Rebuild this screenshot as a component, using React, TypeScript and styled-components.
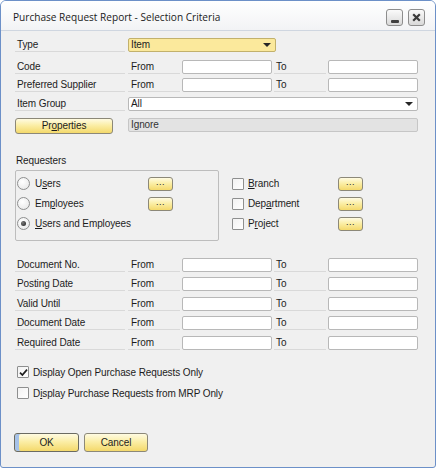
import React from "react";
import styled, { createGlobalStyle } from "styled-components";

const GlobalStyle = createGlobalStyle`
    html, body {
        margin: 0;
        padding: 0;
        background: #ffffff;
    }
    body {
        font-family: "Liberation Sans", Arial, sans-serif;
        font-size: 10px;
        letter-spacing: -0.1px;
        color: #1c1c1c;
    }
`;

const Window = styled.div`
    width: 436px;
    height: 468px;
    box-sizing: border-box;
    border: 1px solid #6c90c8;
    border-radius: 6px 6px 3px 3px;
    background: #f0f0f0;
    display: flex;
    flex-direction: column;
    overflow: hidden;
`;

const TitleBar = styled.div`
    height: 30px;
    flex: none;
    box-sizing: border-box;
    display: flex;
    align-items: flex-start;
    background: linear-gradient(#ffffff, #f2f3f5);
    border-bottom: 1px solid #cfd6e0;
`;

const Title = styled.span`
    font-family: "Open Sans", "Liberation Sans", sans-serif;
    font-size: 10.1px;
    letter-spacing: 0;
    line-height: 16px;
    color: #1b1b1b;
    margin: 8px 0 0 12px;
`;

const TitleButtons = styled.div`
    margin: 8px 10px 0 auto;
    display: flex;
    gap: 5px;
`;

const TitleButton = styled.div`
    width: 17px;
    height: 17px;
    box-sizing: border-box;
    border: 1px solid #8d8d8d;
    border-radius: 3px;
    background: linear-gradient(#fafafa, #d9d9d9);
    display: flex;
    align-items: center;
    justify-content: center;
`;

const MinimizeGlyph = styled.div`
    width: 8px;
    height: 3px;
    margin-top: 7px;
    background: #3f3f3f;
    border-radius: 1px;
`;

const Body = styled.div`
    flex: 1;
    display: flex;
    flex-direction: column;
    padding: 0 17px 15px 14px;
`;

const FieldRow = styled.div<{ $top: number; $align?: string }>`
    display: grid;
    grid-template-columns: 113px 54px 90px 2px 54px 90px;
    align-items: ${(p) => p.$align ?? "end"};
    margin-top: ${(p) => p.$top}px;
    min-height: 14px;
`;

const LabelCell = styled.div<{ $pad?: number; $col?: number }>`
    grid-column: ${(p) => p.$col ?? "auto"};
    height: 14px;
    box-sizing: border-box;
    border-bottom: 1px solid #d9d9d9;
    margin-right: ${(p) => (p.$col ? 2 : 3)}px;
    padding-left: ${(p) => p.$pad ?? 2}px;
    line-height: 14px;
    white-space: nowrap;
`;

const TextBox = styled.div<{ $col: number }>`
    grid-column: ${(p) => p.$col};
    height: 14px;
    box-sizing: border-box;
    border: 1px solid #b8b8b8;
    border-radius: 2px;
    background: #ffffff;
`;

const Select = styled.div<{ $yellow?: boolean; $width?: number }>`
    grid-column: 2 / -1;
    width: ${(p) => (p.$width ? `${p.$width}px` : "auto")};
    height: 14px;
    box-sizing: border-box;
    border: 1px solid ${(p) => (p.$yellow ? "#c2b16c" : "#b8b8b8")};
    border-radius: 2px;
    background: ${(p) => (p.$yellow ? "#fbe99c" : "#ffffff")};
    display: flex;
    align-items: center;
    padding: 0 4px 0 2px;
    line-height: 12px;
`;

const Arrow = styled.span`
    margin-left: auto;
    width: 0;
    height: 0;
    border-left: 4px solid transparent;
    border-right: 4px solid transparent;
    border-top: 4px solid #262626;
`;

const ReadOnlyBox = styled.div`
    grid-column: 2 / -1;
    height: 14px;
    box-sizing: border-box;
    border: 1px solid #c6c6c6;
    border-radius: 2px;
    background: #e3e3e3;
    padding-left: 2px;
    line-height: 12px;
    color: #333;
`;

const YellowButton = styled.div<{ $width: number; $height: number; $default?: boolean }>`
    width: ${(p) => p.$width}px;
    height: ${(p) => p.$height}px;
    box-sizing: border-box;
    border: 1px solid ${(p) => (p.$default ? "#6b6b62" : "#8c8878")};
    border-radius: 3px;
    background: linear-gradient(#fffbe2, #fbeea6 45%, #f4d96b);
    box-shadow: ${(p) => (p.$default ? "inset 4px 0 0 #a6c2e8" : "none")};
    display: flex;
    align-items: center;
    justify-content: center;
    line-height: 12px;
    color: #1c1c1c;
`;

const Dots = styled.span`
    font-size: 9px;
    line-height: 6px;
    letter-spacing: 0.5px;
    padding-bottom: 3px;
`;

const Key = styled.span`
    text-decoration: underline;
    text-underline-offset: 1px;
`;

const SectionTitle = styled.div`
    margin-top: 20px;
    padding-left: 1px;
    line-height: 13px;
`;

const Middle = styled.div`
    display: flex;
    margin-top: 3px;
`;

const GroupBox = styled.div`
    width: 204px;
    height: 71px;
    box-sizing: border-box;
    border: 1px solid #bdbdbd;
    border-radius: 2px;
    padding: 6px 0 0 1px;
    display: flex;
    flex-direction: column;
    gap: 7px;
`;

const OptionColumn = styled.div`
    margin-left: 13px;
    padding-top: 7px;
    display: flex;
    flex-direction: column;
    gap: 7px;
`;

const ChoiceRow = styled.div`
    height: 13px;
    display: flex;
    align-items: center;
`;

const Choice = styled.div<{ $width: number; $gap: number }>`
    width: ${(p) => p.$width}px;
    display: flex;
    align-items: center;
    gap: ${(p) => p.$gap}px;
    white-space: nowrap;
    line-height: 13px;
`;

const Radio = styled.div<{ $on?: boolean }>`
    width: 13px;
    height: 13px;
    flex: none;
    box-sizing: border-box;
    border-radius: 50%;
    border: 1px solid #8e8f8f;
    background: radial-gradient(circle at 40% 35%, #ffffff, #e4e4e4);
    display: flex;
    align-items: center;
    justify-content: center;
    &::after {
        content: "";
        display: ${(p) => (p.$on ? "block" : "none")};
        width: 5px;
        height: 5px;
        border-radius: 50%;
        background: radial-gradient(circle at 35% 35%, #7a7a7a, #1e1e1e);
    }
`;

const Box = styled.div`
    width: 12px;
    height: 12px;
    flex: none;
    box-sizing: border-box;
    border: 1px solid #8e8f8f;
    border-radius: 1px;
    background: linear-gradient(135deg, #f2f2f2, #ffffff);
    display: flex;
    align-items: center;
    justify-content: center;
`;

const CheckRow = styled.div<{ $top: number }>`
    margin-top: ${(p) => p.$top}px;
    padding-left: 2px;
    display: flex;
    align-items: center;
    gap: 4px;
    height: 12px;
    line-height: 13px;
`;

const Footer = styled.div`
    margin-top: auto;
    margin-left: -1px;
    display: flex;
    gap: 5px;
`;

const Check = ({ on }: { on?: boolean }) => (
    <Box>
        {on ? (
            <svg width="9" height="9" viewBox="0 0 9 9">
                <path d="M1 4.6 L3.4 7 L8 1.6" fill="none" stroke="#1f1f1f" strokeWidth="1.7" />
            </svg>
        ) : null}
    </Box>
);

const DotsButton = () => (
    <YellowButton $width={25} $height={14}>
        <Dots>...</Dots>
    </YellowButton>
);

const rangeRows = [
    { label: "Code", top: 8 },
    { label: "Preferred Supplier", top: 4 },
];

const dateRows = [
    { label: "Document No.", top: 17 },
    { label: "Posting Date", top: 5 },
    { label: "Valid Until", top: 6 },
    { label: "Document Date", top: 5 },
    { label: "Required Date", top: 6 },
];

const RangeRow = ({ label, top }: { label: string; top: number }) => (
    <FieldRow $top={top}>
        <LabelCell>{label}</LabelCell>
        <LabelCell $pad={3} $col={2}>From</LabelCell>
        <TextBox $col={3} />
        <LabelCell $pad={2} $col={5}>To</LabelCell>
        <TextBox $col={6} />
    </FieldRow>
);

export default function App() {
    return (
        <>
            <GlobalStyle />
            <Window>
                <TitleBar>
                    <Title>Purchase Request Report - Selection Criteria</Title>
                    <TitleButtons>
                        <TitleButton>
                            <MinimizeGlyph />
                        </TitleButton>
                        <TitleButton>
                            <svg width="9" height="9" viewBox="0 0 9 9">
                                <path d="M1.2 1.2 L7.8 7.8 M7.8 1.2 L1.2 7.8" stroke="#3a3a3a" strokeWidth="2.2" />
                            </svg>
                        </TitleButton>
                    </TitleButtons>
                </TitleBar>

                <Body>
                    <FieldRow $top={7}>
                        <LabelCell>Type</LabelCell>
                        <Select $yellow $width={148}>
                            Item
                            <Arrow />
                        </Select>
                    </FieldRow>

                    {rangeRows.map((r) => (
                        <RangeRow key={r.label} label={r.label} top={r.top} />
                    ))}

                    <FieldRow $top={5}>
                        <LabelCell>Item Group</LabelCell>
                        <Select>
                            All
                            <Arrow />
                        </Select>
                    </FieldRow>

                    <FieldRow $top={7} $align="start">
                        <YellowButton $width={98} $height={16}>
                            Pr<Key>o</Key>perties
                        </YellowButton>
                        <ReadOnlyBox>Ignore</ReadOnlyBox>
                    </FieldRow>

                    <SectionTitle>Requesters</SectionTitle>
                    <Middle>
                        <GroupBox>
                            <ChoiceRow>
                                <Choice $width={131} $gap={5}>
                                    <Radio />
                                    <span>
                                        U<Key>s</Key>ers
                                    </span>
                                </Choice>
                                <DotsButton />
                            </ChoiceRow>
                            <ChoiceRow>
                                <Choice $width={131} $gap={5}>
                                    <Radio />
                                    <span>
                                        Em<Key>p</Key>loyees
                                    </span>
                                </Choice>
                                <DotsButton />
                            </ChoiceRow>
                            <ChoiceRow>
                                <Choice $width={131} $gap={5}>
                                    <Radio $on />
                                    <span>
                                        <Key>U</Key>sers and Employees
                                    </span>
                                </Choice>
                            </ChoiceRow>
                        </GroupBox>

                        <OptionColumn>
                            <ChoiceRow>
                                <Choice $width={106} $gap={4}>
                                    <Check />
                                    <span>
                                        <Key>B</Key>ranch
                                    </span>
                                </Choice>
                                <DotsButton />
                            </ChoiceRow>
                            <ChoiceRow>
                                <Choice $width={106} $gap={4}>
                                    <Check />
                                    <span>
                                        Dep<Key>a</Key>rtment
                                    </span>
                                </Choice>
                                <DotsButton />
                            </ChoiceRow>
                            <ChoiceRow>
                                <Choice $width={106} $gap={4}>
                                    <Check />
                                    <span>
                                        P<Key>r</Key>oject
                                    </span>
                                </Choice>
                                <DotsButton />
                            </ChoiceRow>
                        </OptionColumn>
                    </Middle>

                    {dateRows.map((r) => (
                        <RangeRow key={r.label} label={r.label} top={r.top} />
                    ))}

                    <CheckRow $top={16}>
                        <Check on />
                        <span>Display Open Purchase Requests Only</span>
                    </CheckRow>
                    <CheckRow $top={9}>
                        <Check />
                        <span>
                            D<Key>i</Key>splay Purchase Requests from MRP Only
                        </span>
                    </CheckRow>

                    <Footer>
                        <YellowButton $width={65} $height={19} $default>
                            OK
                        </YellowButton>
                        <YellowButton $width={64} $height={19}>
                            Cancel
                        </YellowButton>
                    </Footer>
                </Body>
            </Window>
        </>
    );
}
